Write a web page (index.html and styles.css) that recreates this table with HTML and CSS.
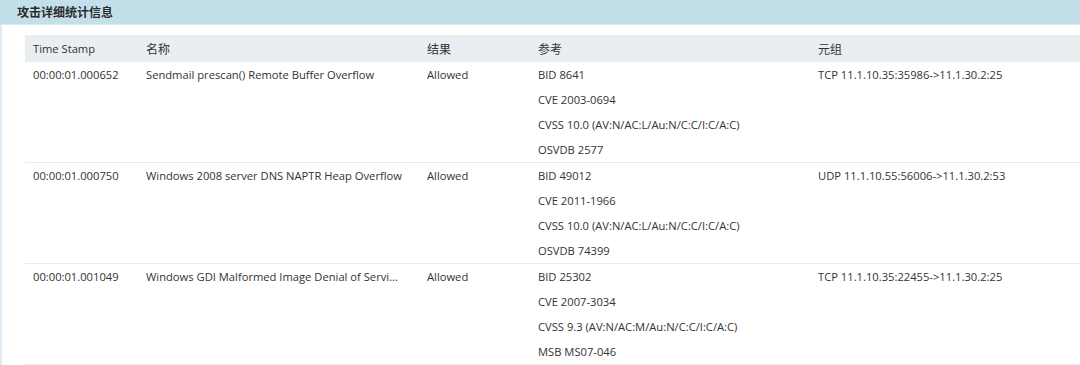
FILE: index.html
```html
<!DOCTYPE html>
<html lang="zh-CN">
<head>
<meta charset="utf-8">
<link rel="stylesheet" href="styles.css">
</head>
<body>
<div class="panel">
  <div class="panel-title">攻击详细统计信息</div>
  <div class="panel-body">
    <table class="grid">
      <colgroup>
        <col class="c-time"><col class="c-name"><col class="c-result"><col class="c-ref"><col class="c-tuple">
      </colgroup>
      <thead>
        <tr><th>Time Stamp</th><th class="cjk">名称</th><th class="cjk">结果</th><th class="cjk">参考</th><th class="cjk">元组</th></tr>
      </thead>
      <tbody>
        <tr>
          <td>00:00:01.000652</td>
          <td>Sendmail prescan() Remote Buffer Overflow</td>
          <td>Allowed</td>
          <td><div class="ref">BID 8641</div><div class="ref">CVE 2003-0694</div><div class="ref">CVSS 10.0 (AV:N/AC:L/Au:N/C:C/I:C/A:C)</div><div class="ref">OSVDB 2577</div></td>
          <td>TCP 11.1.10.35:35986-&gt;11.1.30.2:25</td>
        </tr>
        <tr>
          <td>00:00:01.000750</td>
          <td>Windows 2008 server DNS NAPTR Heap Overflow</td>
          <td>Allowed</td>
          <td><div class="ref">BID 49012</div><div class="ref">CVE 2011-1966</div><div class="ref">CVSS 10.0 (AV:N/AC:L/Au:N/C:C/I:C/A:C)</div><div class="ref">OSVDB 74399</div></td>
          <td>UDP 11.1.10.55:56006-&gt;11.1.30.2:53</td>
        </tr>
        <tr>
          <td>00:00:01.001049</td>
          <td>Windows GDI Malformed Image Denial of Servi...</td>
          <td>Allowed</td>
          <td><div class="ref">BID 25302</div><div class="ref">CVE 2007-3034</div><div class="ref">CVSS 9.3 (AV:N/AC:M/Au:N/C:C/I:C/A:C)</div><div class="ref">MSB MS07-046</div></td>
          <td>TCP 11.1.10.35:22455-&gt;11.1.30.2:25</td>
        </tr>
      </tbody>
    </table>
  </div>
</div>
</body>
</html>
```
FILE: styles.css
```css
html, body {
  margin: 0;
  padding: 0;
  background: #ffffff;
}
body {
  font-family: "Open Sans", "Noto Sans CJK SC", sans-serif;
  font-size: 11.2px;
  color: #333333;
}
.panel {
  width: 1080px;
  height: 365px;
  overflow: hidden;
}
.panel-title {
  height: 24px;
  line-height: 24px;
  padding-left: 17px;
  background: #c3dfea;
  border-bottom: 1px solid #d5e9f1;
  font-weight: bold;
  font-size: 12px;
  font-family: "Noto Sans CJK SC", sans-serif;
  color: #2b2b2b;
}
.panel-body {
  border-left: 2px solid #deebf6;
  padding: 10px 0 0 23px;
  height: 400px;
}
.grid {
  border-collapse: collapse;
  table-layout: fixed;
  width: 1055px;
}
.c-time { width: 113px; }
.c-name { width: 281px; }
.c-result { width: 111px; }
.c-ref { width: 280px; }
.c-tuple { width: 270px; }
.grid th {
  background: #e8eef1;
  height: 27px;
  padding: 0 0 0 8px;
  text-align: left;
  font-weight: normal;
  color: #333;
}
.grid th.cjk {
  font-family: "Noto Sans CJK SC", sans-serif;
  font-size: 12px;
}
.grid td {
  padding: 0 0 0 8px;
  vertical-align: top;
  line-height: 25px;
  border-bottom: 1px solid #ebebeb;
  white-space: nowrap;
}
.ref {
  height: 25px;
}
```
